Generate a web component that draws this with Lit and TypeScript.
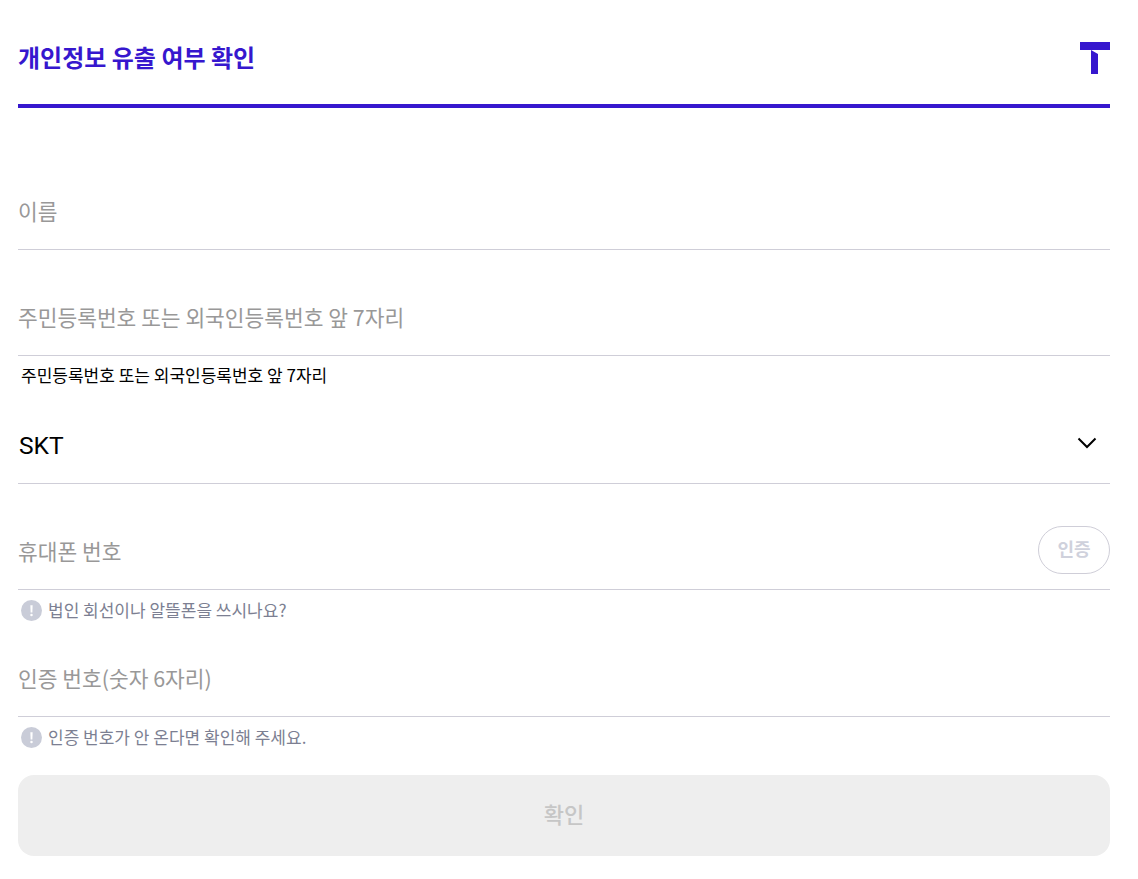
import {LitElement, html, css} from 'lit';
import {customElement} from 'lit/decorators.js';

const INFO_ICON = html`<svg class="info" viewBox="0 0 22 22">
  <circle cx="11" cy="11" r="11" fill="#c9ccd8"></circle>
  <path d="M9.8 5.500h2.400l-.3 7.500h-1.800z" fill="#fff"></path>
  <circle cx="11" cy="15.600" r="1.300" fill="#fff"></circle>
</svg>`;

@customElement('app-root')
export class AppRoot extends LitElement {
  static override styles = css`
    :host {
      display: block;
      font-family: 'Noto Sans CJK KR', Roboto, sans-serif;
      background: #fff;
    }
    .page {
      padding: 0 28px 23px 18px;
    }
    .head {
      display: flex;
      justify-content: space-between;
      align-items: center;
      height: 104px;
      border-bottom: 4px solid #3617ce;
    }
    h1 {
      margin: 10px 0 0;
      font-size: 24px;
      line-height: 32px;
      font-weight: 700;
      color: #3617ce;
    }
    .logo {
      display: block;
      width: 30px;
      height: 32px;
      margin-top: 12px;
    }
    .form {
      padding-top: 66px;
    }
    .field {
      display: flex;
      align-items: center;
      justify-content: space-between;
      height: 75px;
      border-bottom: 1px solid #cfced8;
      font-size: 21.45px;
      color: #999898;
    }
    .label {
      padding-bottom: 2px;
    }
    .field + .field {
      margin-top: 30px;
    }
    .hint-plain + .field {
      margin-top: 21px;
    }
    .hint + .field {
      margin-top: 20px;
    }
    .hint-plain {
      height: 22px;
      padding: 8px 0 1px 3px;
      font-size: 17px;
      line-height: 22px;
      color: #000;
    }
    .hint {
      display: flex;
      align-items: center;
      gap: 6px;
      height: 22px;
      padding: 9px 0 0 3px;
      font-size: 17px;
      line-height: 22px;
      color: #7c7f92;
    }
    .info {
      width: 21px;
      height: 21px;
      flex: none;
    }
    .select {
      color: #000;
      font-family: Roboto, sans-serif;
      font-size: 24.6px;
    }
    .select .label {
      padding: 0 0 0 1px;
    }
    .chevron {
      width: 20px;
      height: 12px;
      margin: 0 13px 6px 0;
    }
    .verify {
      box-sizing: border-box;
      width: 72px;
      height: 48px;
      margin-bottom: 4px;
      border: 1px solid #cfced8;
      border-radius: 24px;
      background: #fff;
      color: #cfd1dc;
      font: 700 18px 'Noto Sans CJK KR', sans-serif;
      padding: 0 0 3px;
    }
    .submit {
      display: block;
      width: 100%;
      height: 81px;
      margin-top: 27px;
      border: 0;
      border-radius: 16px;
      background: #eeeeee;
      color: #c6c6c6;
      font: 500 22px 'Noto Sans CJK KR', sans-serif;
      padding: 0 0 5px;
    }
  `;

  override render() {
    return html`
      <div class="page">
        <header class="head">
          <h1>개인정보 유출 여부 확인</h1>
          <svg class="logo" viewBox="0 0 30 32">
            <path d="M0 0h30v8H0z" fill="#3617ce"></path>
            <path d="M11 8l7 4v20h-7z" fill="#3617ce"></path>
          </svg>
        </header>
        <div class="form">
          <div class="field"><span class="label">이름</span></div>
          <div class="field"><span class="label">주민등록번호 또는 외국인등록번호 앞 7자리</span></div>
          <div class="hint-plain">주민등록번호 또는 외국인등록번호 앞 7자리</div>
          <div class="field select">
            <span class="label">SKT</span>
            <svg class="chevron" viewBox="0 0 20 12">
              <path d="M1.500 1.500L10 10l8.500-8.500" fill="none" stroke="#000" stroke-width="2"></path>
            </svg>
          </div>
          <div class="field">
            <span class="label">휴대폰 번호</span>
            <button class="verify">인증</button>
          </div>
          <div class="hint">${INFO_ICON}<span>법인 회선이나 알뜰폰을 쓰시나요?</span></div>
          <div class="field"><span class="label">인증 번호(숫자 6자리)</span></div>
          <div class="hint">${INFO_ICON}<span>인증 번호가 안 온다면 확인해 주세요.</span></div>
          <button class="submit">확인</button>
        </div>
      </div>
    `;
  }
}
